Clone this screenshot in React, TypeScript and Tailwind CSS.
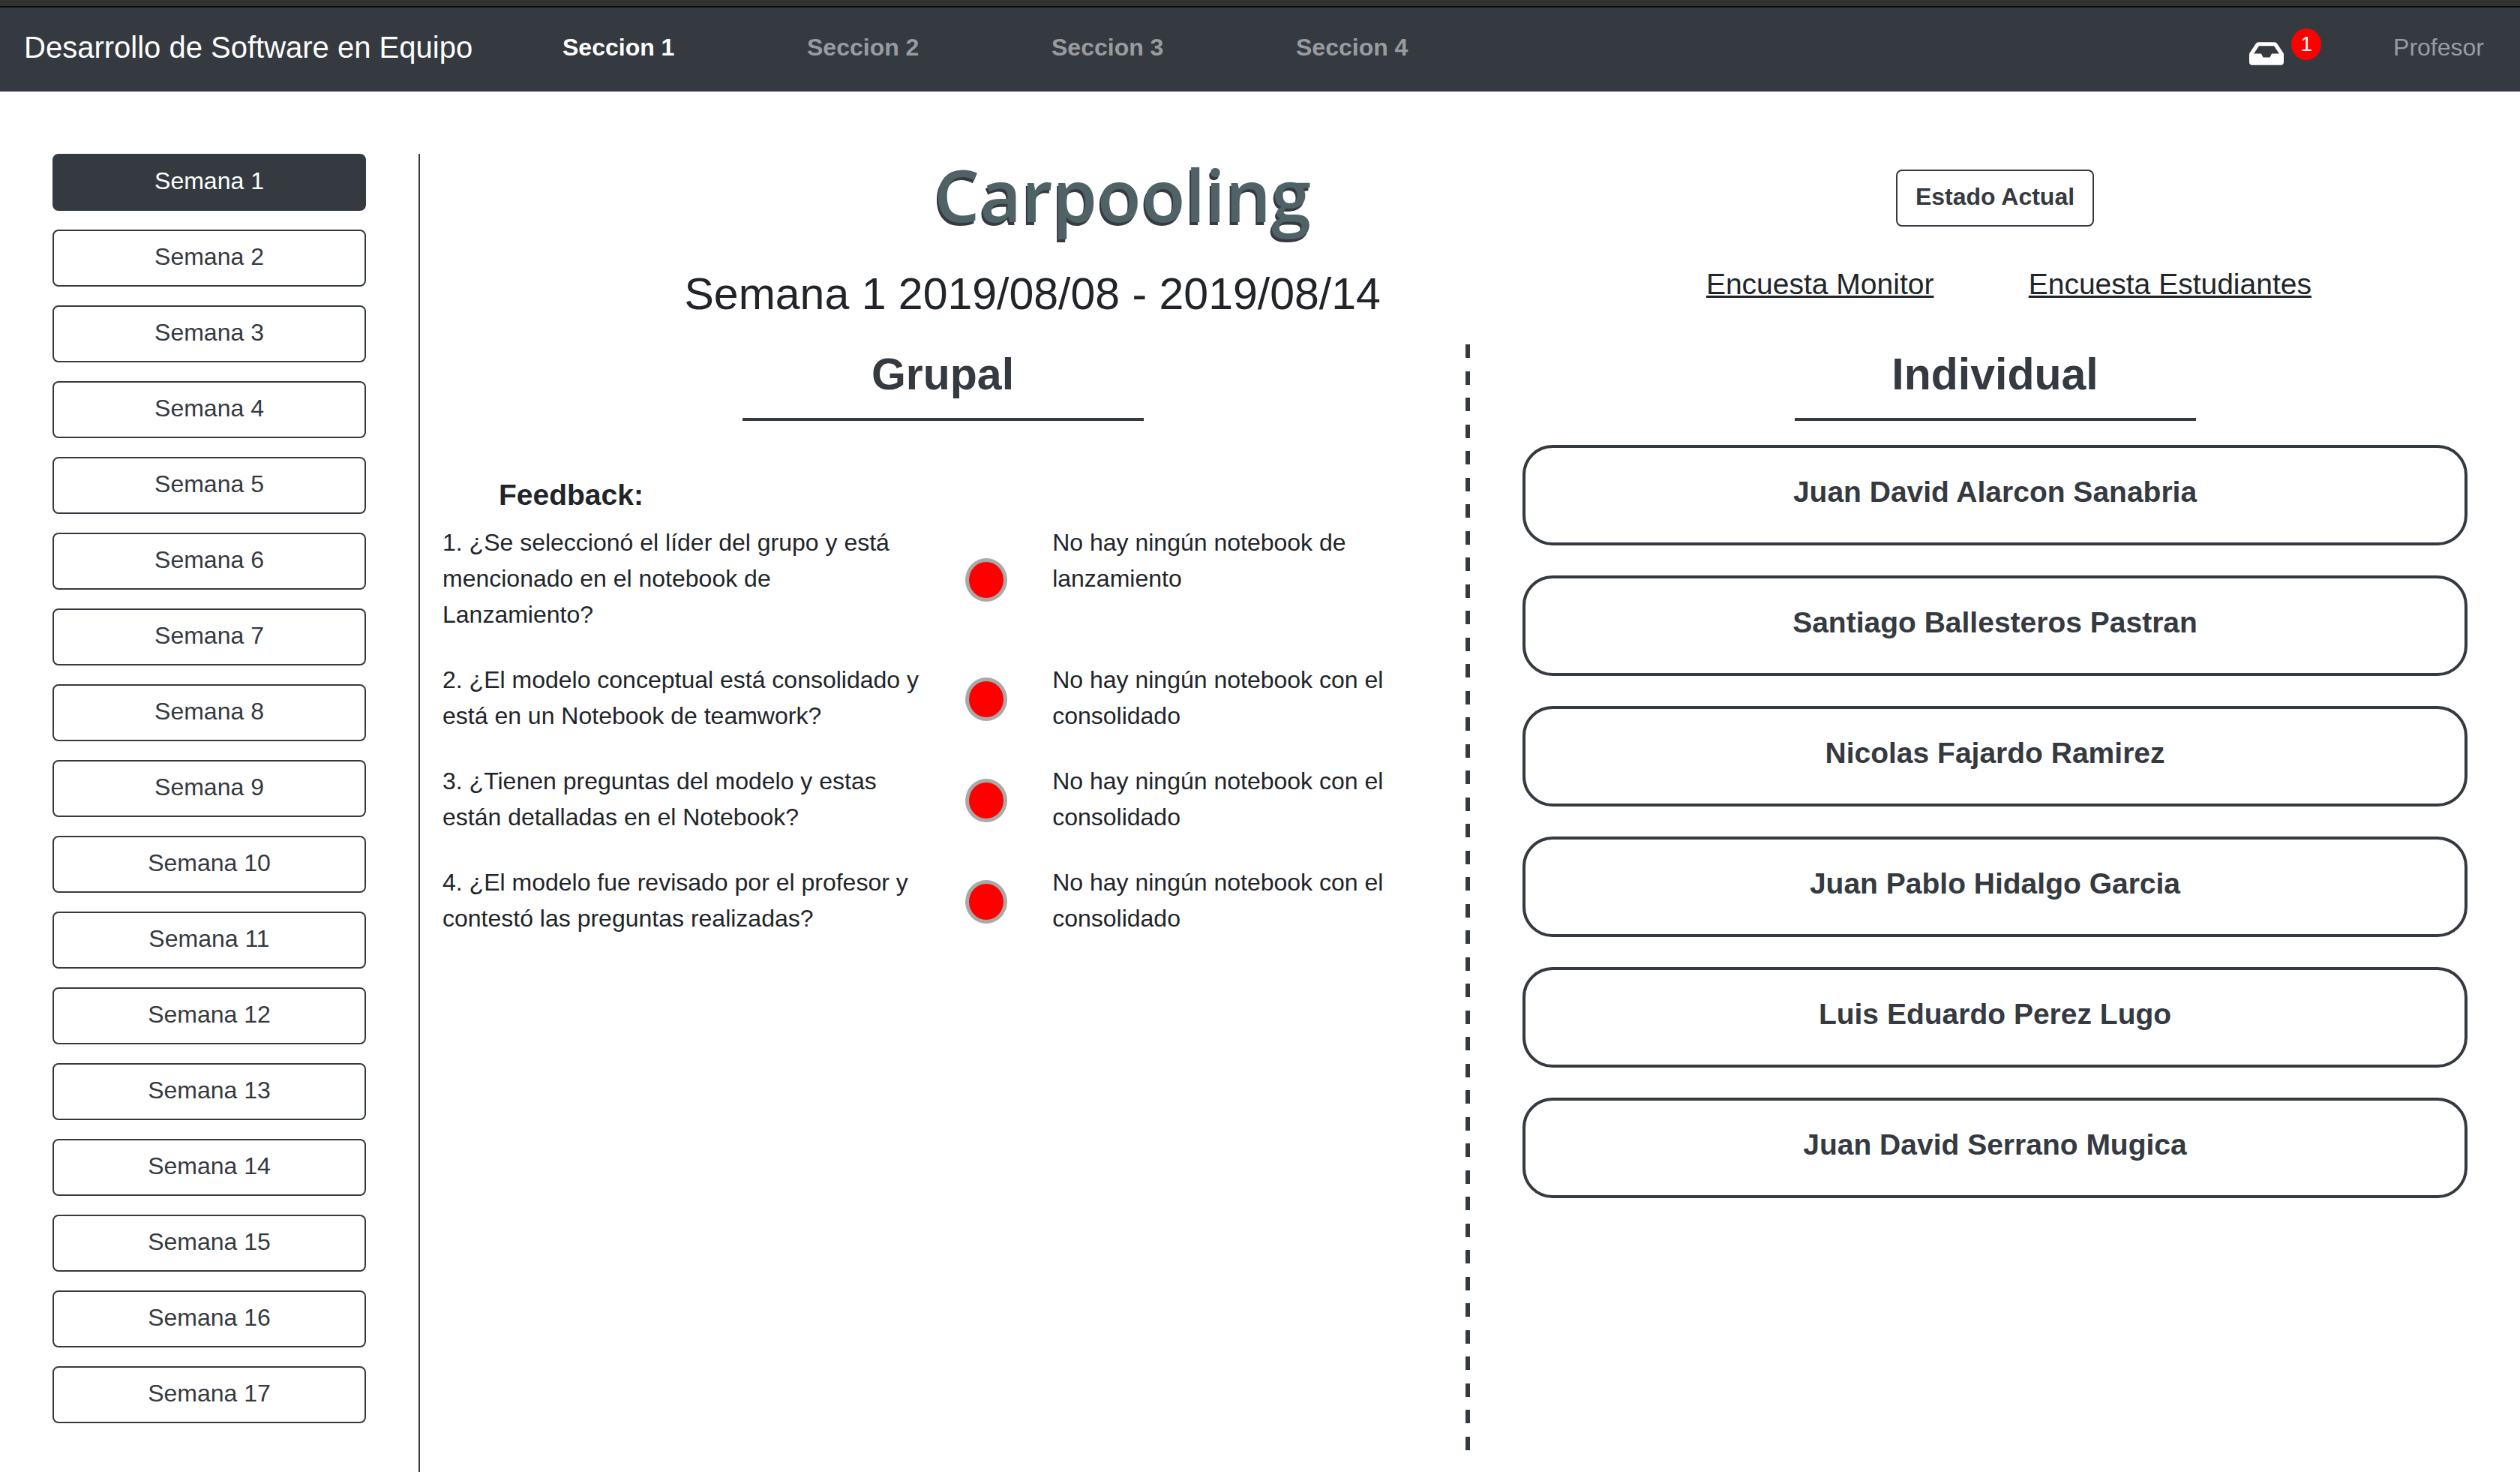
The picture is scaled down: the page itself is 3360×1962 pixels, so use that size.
import { FaInbox } from "react-icons/fa";

const sections = ["Seccion 1", "Seccion 2", "Seccion 3", "Seccion 4"];

const weeks = Array.from({ length: 17 }, (_, i) => `Semana ${i + 1}`);

const feedback = [
  {
    question:
      "1. ¿Se seleccionó el líder del grupo y está mencionado en el notebook de Lanzamiento?",
    answer: "No hay ningún notebook de lanzamiento",
  },
  {
    question:
      "2. ¿El modelo conceptual está consolidado y está en un Notebook de teamwork?",
    answer: "No hay ningún notebook con el consolidado",
  },
  {
    question:
      "3. ¿Tienen preguntas del modelo y estas están detalladas en el Notebook?",
    answer: "No hay ningún notebook con el consolidado",
  },
  {
    question:
      "4. ¿El modelo fue revisado por el profesor y contestó las preguntas realizadas?",
    answer: "No hay ningún notebook con el consolidado",
  },
];

const students = [
  "Juan David Alarcon Sanabria",
  "Santiago Ballesteros Pastran",
  "Nicolas Fajardo Ramirez",
  "Juan Pablo Hidalgo Garcia",
  "Luis Eduardo Perez Lugo",
  "Juan David Serrano Mugica",
];

function Navbar() {
  return (
    <header className="border-t-8 border-[#323233] bg-[#353a41]">
      <nav className="flex h-[114px] items-center border-t-2 border-[#0c0c0d] px-8 pb-[6px] pr-12">
        <a href="#" className="w-[718px] text-[40px] leading-[60px] text-white">
          Desarrollo de Software en Equipo
        </a>
        <ul className="flex text-[32px] leading-[48px] font-bold">
          {sections.map((name, i) => (
            <li key={name} className="w-[326px]">
              <a href="#" className={i === 0 ? "text-white" : "text-[#999c9f]"}>
                {name}
              </a>
            </li>
          ))}
        </ul>
        <button
          type="button"
          aria-label="Notificaciones"
          className="ml-auto flex items-center gap-[10px] text-white"
        >
          <FaInbox className="mt-4 h-[41px] w-[46px]" />
          <span className="mb-2 rounded-[50%] bg-[#ff0000] px-3 text-[28px] leading-[42px]">
            1
          </span>
        </button>
        <a href="#" className="ml-24 text-[32px] leading-[48px] text-[#999c9f]">
          Profesor
        </a>
      </nav>
    </header>
  );
}

function Sidebar() {
  return (
    <aside className="flex w-[560px] shrink-0 flex-col gap-[25px] border-r-2 border-[#353a41] px-[70px]">
      {weeks.map((week, i) => (
        <button
          key={week}
          type="button"
          className={
            i === 0
              ? "rounded-lg border-2 border-[#353a41] bg-[#353a41] pt-[10px] pb-[14px] text-[32px] leading-[48px] text-white"
              : "rounded-lg border-2 border-[#353a41] pt-[10px] pb-[14px] text-[32px] leading-[48px] text-[#353a41]"
          }
        >
          {week}
        </button>
      ))}
    </aside>
  );
}

function SectionTitle({ children }: { children: string }) {
  return (
    <h2 className="mx-auto w-[535px] border-b-4 border-[#353a41] pb-[18px] text-center text-[59px] leading-[80px] font-bold text-[#353a41]">
      {children}
    </h2>
  );
}

function ProjectHeader() {
  return (
    <div className="grid grid-cols-12 gap-y-[37px] text-center">
      <h1 className="col-span-7 pl-[240px] font-['Open_Sans',sans-serif] text-[96px] leading-[108px] font-semibold text-[#4f6367] [text-shadow:-2px_4px_0_#353a41]">
        Carpooling
      </h1>
      <div className="col-span-4 pt-[21px]">
        <button
          type="button"
          className="rounded-lg border-2 border-[#353a41] px-6 pt-[10px] pb-[14px] text-[32px] leading-[48px] font-bold text-[#353a41]"
        >
          Estado Actual
        </button>
      </div>
      <p className="col-span-7 col-start-1 text-[59px] leading-[84px]">
        Semana 1 2019/08/08 - 2019/08/14
      </p>
      <div className="col-span-2 text-[39px] leading-[58px]">
        <a href="#" className="underline">
          Encuesta Monitor
        </a>
      </div>
      <div className="col-span-2 text-[39px] leading-[58px]">
        <a href="#" className="underline">
          Encuesta Estudiantes
        </a>
      </div>
    </div>
  );
}

function GroupPanel() {
  return (
    <section className="flex-1">
      <SectionTitle>Grupal</SectionTitle>
      <h3 className="mt-[70px] pl-[105px] text-[39px] leading-[58px] font-bold">
        Feedback:
      </h3>
      <ul className="mt-[10px] flex flex-col gap-[39px] text-[32px] leading-[48px]">
        {feedback.map(({ question, answer }) => (
          <li key={question} className="grid grid-cols-12">
            <p className="col-span-6 px-[30px]">{question}</p>
            <div className="flex items-center justify-center pt-1">
              <span className="h-[58px] w-[56px] rounded-[50%] border-5 border-[#a9a9a9] bg-[#ff0000]" />
            </div>
            <p className="col-span-5 px-[30px]">{answer}</p>
          </li>
        ))}
      </ul>
    </section>
  );
}

function DashedDivider() {
  return (
    <div className="flex w-[6px] flex-col justify-between" aria-hidden="true">
      {Array.from({ length: 42 }, (_, i) => (
        <span key={i} className="h-[18px] bg-[#353a41]" />
      ))}
    </div>
  );
}

function IndividualPanel() {
  return (
    <section className="w-1/2">
      <SectionTitle>Individual</SectionTitle>
      <div className="mx-auto mt-8 flex w-[90%] flex-col gap-10">
        {students.map((name) => (
          <button
            key={name}
            type="button"
            className="rounded-[40px] border-4 border-[#353a41] pt-[30px] pb-[38px] text-[39px] leading-[58px] font-bold text-[#353a41]"
          >
            {name}
          </button>
        ))}
      </div>
    </section>
  );
}

export default function App() {
  return (
    <div className="flex min-h-screen flex-col bg-white font-['Liberation_Sans',Arial,sans-serif] text-[#212529]">
      <Navbar />
      <div className="flex flex-1 pt-[83px]">
        <Sidebar />
        <main className="flex flex-1 flex-col">
          <ProjectHeader />
          <div className="mt-[25px] mb-[29px] flex flex-1">
            <GroupPanel />
            <DashedDivider />
            <IndividualPanel />
          </div>
        </main>
      </div>
    </div>
  );
}
